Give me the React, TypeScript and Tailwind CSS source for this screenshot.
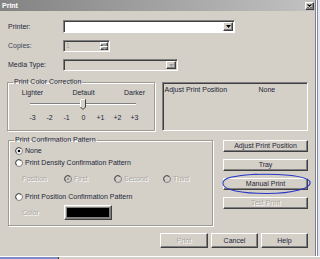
import React from "react";

const Raised = ({
  children,
  className = "",
}: {
  children?: React.ReactNode;
  className?: string;
}) => (
  <div
    className={`flex items-center justify-center bg-[#d4d0c8] border border-t-[#fff] border-l-[#fff] border-r-[#404040] border-b-[#404040] shadow-[inset_-1px_-1px_0_#808080] ${className}`}
  >
    {children}
  </div>
);

const Btn = ({ label, disabled, className = "" }: { label: string; disabled?: boolean; className?: string }) => (
  <Raised className={`${disabled ? "text-[#a9a7a1] [text-shadow:1px_1px_0_#fff]" : "text-[#1d2638]"} ${className}`}>
    {label}
  </Raised>
);

const Arrow = ({ up, color = "#000" }: { up?: boolean; color?: string }) => (
  <svg width="5" height="3" viewBox="0 0 5 3">
    <path d={up ? "M0 3 L2.5 0 L5 3 Z" : "M0 0 L5 0 L2.5 3 Z"} fill={color} />
  </svg>
);

const Radio = ({ checked, disabled }: { checked?: boolean; disabled?: boolean }) => (
  <svg width="8" height="8" viewBox="0 0 8 8" className="shrink-0">
    <circle cx="4" cy="4" r="3.5" fill={disabled ? "#d4d0c8" : "#fff"} stroke="#808080" />
    <path d="M1.6 6 A3 3 0 0 1 6 1.6" fill="none" stroke="#404040" strokeWidth="0.8" />
    {checked && <circle cx="4" cy="4" r="1.3" fill={disabled ? "#9a9a9a" : "#000"} />}
  </svg>
);

const Sunken = ({ children, className = "" }: { children?: React.ReactNode; className?: string }) => (
  <div
    className={`flex items-center border border-t-[#808080] border-l-[#808080] border-r-[#fff] border-b-[#fff] shadow-[inset_1px_1px_0_#404040] ${className}`}
  >
    {children}
  </div>
);

const Group = ({
  title,
  className = "",
  children,
}: {
  title: string;
  className?: string;
  children?: React.ReactNode;
}) => (
  <fieldset
    className={`border border-[#9d9b95] shadow-[inset_1px_1px_0_#fff,1px_1px_0_#fff] ${className}`}
  >
    <legend className="ml-[5px] px-[1px] leading-[8px] text-[#1d2638]">{title}</legend>
    {children}
  </fieldset>
);

const ticks = ["-3", "-2", "-1", "0", "+1", "+2", "+3"];

export default function App() {
  return (
    <div className="w-[320px] h-[259px] bg-[#dcdcdc] flex flex-col font-['Liberation_Sans',Arial,sans-serif] text-[7px] leading-[8px] text-[#1d2638] overflow-hidden">
      <div className="flex h-[256px]">
        <div className="w-[316px] h-full flex flex-col bg-[#d4d0c8] border-r border-r-[#808080]">
          {/* title bar */}
          <div className="h-[11px] flex items-center justify-between bg-gradient-to-r from-[#838383] to-[#c2c2c2] pl-[2px] pr-[1px]">
            <span className="text-white font-bold text-[7px]">Print</span>
            <Raised className="w-[9px] h-[8px]">
              <svg width="5" height="4" viewBox="0 0 5 4">
                <path d="M0.5 0.5 L4.5 3.5 M4.5 0.5 L0.5 3.5" stroke="#000" strokeWidth="1.1" />
              </svg>
            </Raised>
          </div>

          <div className="flex flex-col pl-[8px] pr-[7px]">
            {/* Printer */}
            <div className="flex items-center mt-[9px] h-[13px]">
              <span className="w-[55px]">Printer:</span>
              <Sunken className="w-[172px] h-[13px] bg-white justify-end pr-[1px]">
                <Raised className="w-[10px] h-[9px]">
                  <Arrow />
                </Raised>
              </Sunken>
            </div>
            {/* Copies */}
            <div className="flex items-center mt-[7px] h-[12px]">
              <span className="w-[55px] text-[#3e4758]">Copies:</span>
              <Sunken className="w-[47px] h-[12px] bg-[#d4d0c8] justify-between pl-[2px] pr-[1px]">
                <span className="text-[#a9a7a1]">1</span>
                <div className="flex flex-col">
                  <Raised className="w-[8px] h-[4px]">
                    <Arrow up color="#a0a0a0" />
                  </Raised>
                  <Raised className="w-[8px] h-[4px]">
                    <Arrow color="#a0a0a0" />
                  </Raised>
                </div>
              </Sunken>
            </div>
            {/* Media Type */}
            <div className="flex items-center mt-[7px] h-[12px]">
              <span className="w-[55px]">Media Type:</span>
              <Sunken className="w-[115px] h-[12px] bg-[#d4d0c8] justify-end pr-[1px]">
                <Raised className="w-[10px] h-[8px]">
                  <Arrow color="#9a9a9a" />
                </Raised>
              </Sunken>
            </div>

            {/* color correction + adjust position */}
            <div className="flex items-start mt-[7px]">
              <Group title="Print Color Correction" className="w-[148px] h-[53px] ml-[-1px]">
                <div className="grid grid-cols-[repeat(7,17px)] ml-[16px] mt-[3px]">
                  <span className="col-start-1 whitespace-nowrap flex justify-center">Lighter</span>
                  <span className="col-start-4 whitespace-nowrap flex justify-center">Default</span>
                  <span className="col-start-7 whitespace-nowrap flex justify-center">Darker</span>
                </div>
                <div className="relative ml-[22px] w-[106px] h-[14px] flex items-center">
                  <div className="w-full h-[2px] border-t border-t-[#808080] border-b border-b-[#fff]" />
                  <svg
                    className="absolute left-[50px] top-[2px]"
                    width="6"
                    height="11"
                    viewBox="0 0 6 11"
                  >
                    <path d="M0.5 0.5 H5.5 V8 L3 10.5 L0.5 8 Z" fill="#d4d0c8" stroke="#404040" />
                    <path d="M0.5 8 V0.5 H5" fill="none" stroke="#fff" />
                  </svg>
                </div>
                <div className="grid grid-cols-[repeat(7,17px)] ml-[16px] mt-[3px]">
                  {ticks.map((t) => (
                    <span key={t} className="text-center">
                      {t}
                    </span>
                  ))}
                </div>
              </Group>
              <Sunken className="w-[147px] h-[49px] mt-[4px] ml-[7px] items-start pt-[3px] pl-[2px]">
                <span className="w-[94px]">Adjust Print Position</span>
                <span>None</span>
              </Sunken>
            </div>

            {/* confirmation pattern + side buttons */}
            <div className="flex items-start mt-[5px]">
              <Group title="Print Confirmation Pattern" className="w-[205px] h-[90px]">
                <div className="flex flex-col pl-[6px]">
                  <div className="flex items-center gap-[2px] h-[10px] mt-[2px]">
                    <Radio checked />
                    <span>None</span>
                  </div>
                  <div className="flex items-center gap-[2px] h-[10px] mt-[2px]">
                    <Radio />
                    <span>Print Density Confirmation Pattern</span>
                  </div>
                  <div className="grid grid-cols-[42px_50px_49px_40px] items-center h-[10px] mt-[6px] pl-[7px] text-[#a9a7a1] [text-shadow:1px_1px_0_#fff]">
                    <span>Position</span>
                    <div className="flex items-center gap-[2px]">
                      <Radio checked disabled />
                      <span>First</span>
                    </div>
                    <div className="flex items-center gap-[2px]">
                      <Radio disabled />
                      <span>Second</span>
                    </div>
                    <div className="flex items-center gap-[2px]">
                      <Radio disabled />
                      <span>Third</span>
                    </div>
                  </div>
                  <div className="flex items-center gap-[2px] h-[10px] mt-[8px]">
                    <Radio />
                    <span>Print Position Confirmation Pattern</span>
                  </div>
                  <div className="flex items-center h-[15px] mt-[3px] pl-[7px]">
                    <span className="w-[42px] text-[#a9a7a1] [text-shadow:1px_1px_0_#fff]">Color</span>
                    <Raised className="w-[48px] h-[15px] p-[1px]">
                      <div className="w-full h-full bg-black border border-[#808080]" />
                    </Raised>
                  </div>
                </div>
              </Group>
              <div className="relative flex flex-col gap-[7px] mt-[4px] ml-[10px]">
                <Btn label="Adjust Print Position" className="w-[85px] h-[12px]" />
                <Btn label="Tray" className="w-[85px] h-[12px]" />
                <Btn label="Manual Print" className="w-[85px] h-[12px]" />
                <Btn label="Test Print" disabled className="w-[85px] h-[12px]" />
                <svg
                  className="absolute left-[-2px] top-[33px] pointer-events-none"
                  width="92"
                  height="22"
                  viewBox="0 0 92 22"
                >
                  <path
                    d="M30 1.5 C55 0.5 86 2 89 9 C91 15 72 20.5 46 20.5 C20 20.5 3 17 2 11 C1 5 12 2.5 36 1.2"
                    fill="none"
                    stroke="#2535c8"
                    strokeWidth="1.1"
                  />
                </svg>
              </div>
            </div>

            {/* bottom buttons */}
            <div className="flex justify-end gap-[3px] mt-[7px]">
              <Btn label="Print" disabled className="w-[48px] h-[15px]" />
              <Btn label="Cancel" className="w-[47px] h-[15px]" />
              <Btn label="Help" className="w-[47px] h-[15px]" />
            </div>
          </div>
        </div>
        <div className="w-[4px] h-full flex">
          <div className="w-[1px] bg-[#fff]" />
          <div className="w-[1px] bg-[#7d8ac0]" />
          <div className="flex-1 bg-[#e6e6e6]" />
        </div>
      </div>
      <div className="h-[3px] flex border-t border-t-[#fff]">
        <div className="w-[58px] bg-[#7b8bc4]" />
        <div className="w-[1px] bg-[#404040]" />
        <div className="flex-1 bg-[#d4d0c8]" />
      </div>
    </div>
  );
}
